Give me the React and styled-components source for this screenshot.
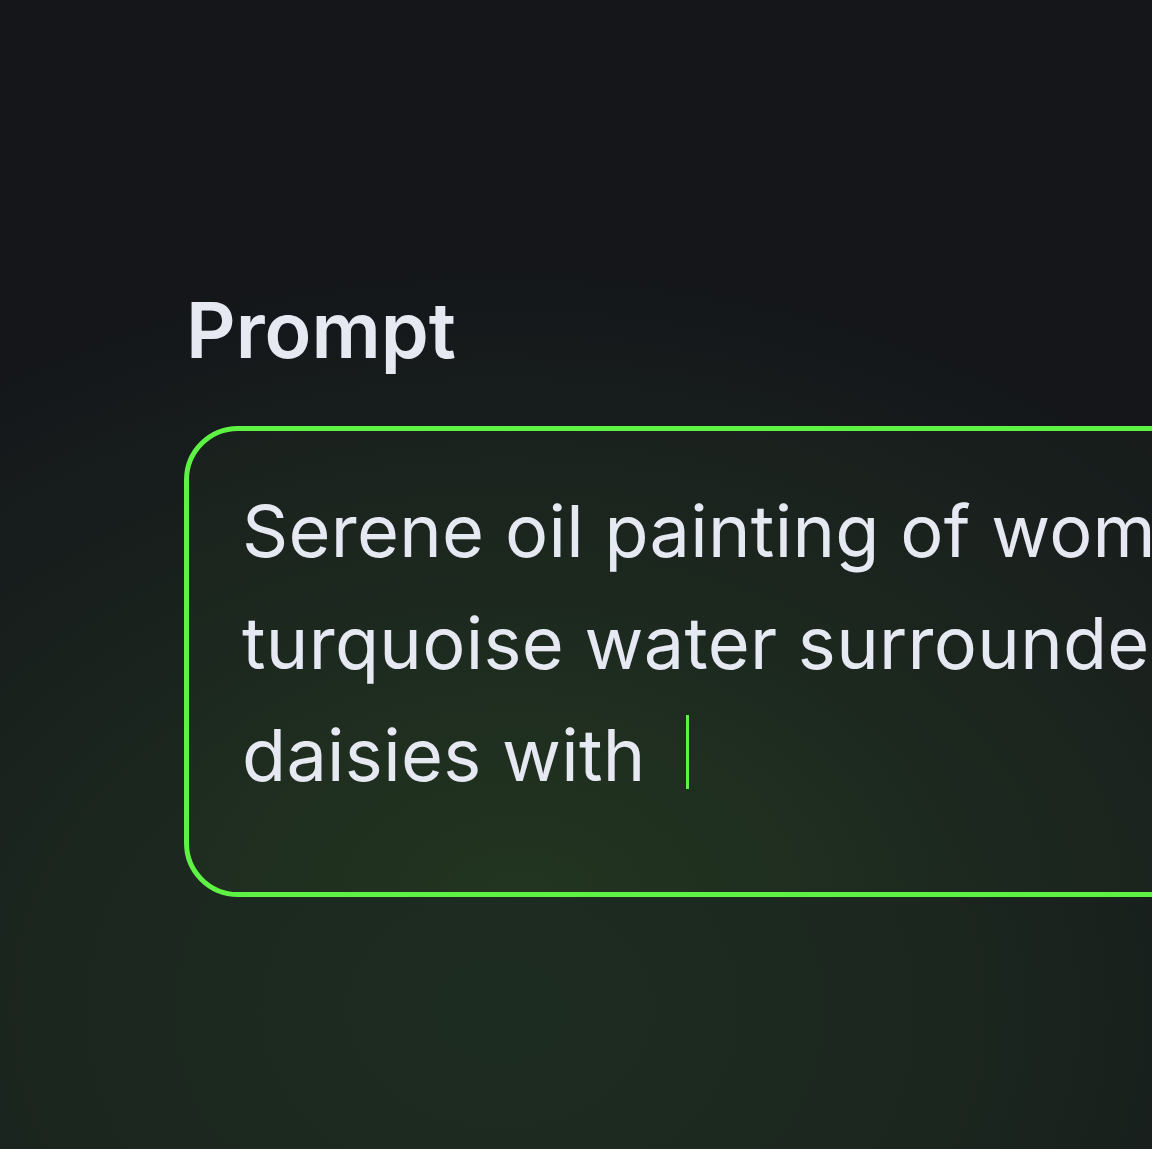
import React from 'react';
import styled, { createGlobalStyle } from 'styled-components';

const GlobalStyle = createGlobalStyle`
  html, body {
    margin: 0;
    padding: 0;
    overflow: hidden;
    background: #14161a;
  }
  #root {
    width: 1152px;
    height: 1149px;
    overflow: hidden;
  }
`;

const Page = styled.div`
  box-sizing: border-box;
  width: 1152px;
  height: 1149px;
  padding: 292px 0 0 184px;
  display: flex;
  flex-direction: column;
  gap: 57px;
  background:
    radial-gradient(ellipse 980px 760px at 500px 1010px, #1d2c20 0%, #1c281f 40%, rgba(20, 22, 26, 0) 100%),
    #14161a;
  font-family: Inter, 'Liberation Sans', sans-serif;
  overflow: hidden;
`;

const Label = styled.h1`
  margin: 0 0 0 2px;
  font-size: 77px;
  line-height: 1;
  font-weight: 600;
  color: #e6e8f2;
  letter-spacing: 0;
`;

const PromptBox = styled.div`
  box-sizing: border-box;
  width: 1240px;
  padding: 44px 0 81px 53px;
  border: 5px solid #5ef244;
  border-radius: 54px;
  background:
    radial-gradient(ellipse 760px 520px at 330px 470px, rgba(36, 58, 32, 0.75) 0%, rgba(32, 48, 32, 0.4) 55%, rgba(30, 40, 32, 0.15) 100%),
    rgba(28, 36, 32, 0.35);
`;

const PromptText = styled.p`
  margin: 0;
  font-size: 72px;
  line-height: 112px;
  font-weight: 400;
  color: #e6e8f2;
  white-space: nowrap;
  letter-spacing: 0.3px;
`;

const Caret = styled.span`
  display: inline-block;
  width: 3px;
  height: 74px;
  margin-left: 40px;
  vertical-align: -8px;
  background: #5ef244;
`;

export default function App() {
  return (
    <>
      <GlobalStyle />
      <Page>
        <Label>Prompt</Label>
        <PromptBox>
          <PromptText>
            Serene oil painting of woman in
            <br />
            turquoise water surrounded by
            <br />
            daisies with
            <Caret />
          </PromptText>
        </PromptBox>
      </Page>
    </>
  );
}
